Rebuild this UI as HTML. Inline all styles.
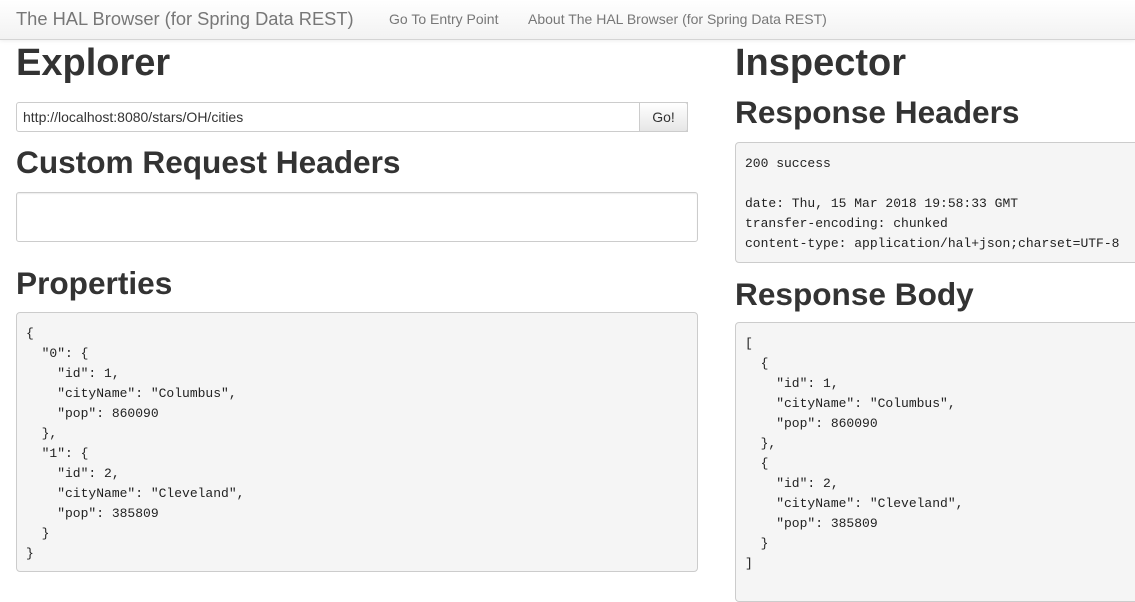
<!DOCTYPE html>
<html><head><style>
body{margin:0;width:1135px;height:582px;overflow:hidden;background:#fff;font-family:"Liberation Sans",sans-serif;color:#333;position:relative}
.nav{position:absolute;left:0;top:0;width:1135px;height:39px;background:linear-gradient(#fff,#f2f2f2);border-bottom:1px solid #d4d4d4;box-shadow:0 1px 4px rgba(0,0,0,.07)}
.a{position:absolute;white-space:nowrap}
.brand{left:16px;top:8px;font-size:18.3px;color:#777;font-weight:300}
.lk{top:11px;font-size:14px;color:#777}
h1,h2{margin:0;position:absolute;font-weight:bold;white-space:nowrap;color:#333}
h1{font-size:38px}
h2{font-size:31.6px}
pre{margin:0;position:absolute;background:#f5f5f5;border:1px solid #ccc;border-radius:4px;font-family:"Liberation Mono",monospace;font-size:13px;line-height:20px;padding:9px 9px;box-sizing:border-box;color:#222}
.in{position:absolute;border:1px solid #ccc;box-sizing:border-box;border-radius:3px;background:#fff}
</style></head><body>
<div class="nav"></div>
<div class="a brand">The HAL Browser (for Spring Data REST)</div>
<div class="a lk" style="left:389px">Go To Entry Point</div>
<div class="a lk" style="left:528px">About The HAL Browser (for Spring Data REST)</div>

<h1 style="left:16px;top:42px">Explorer</h1>
<div class="in" style="left:16px;top:102px;width:672px;height:30px;border-radius:3px 0 0 3px"></div>
<div class="a" style="left:23px;top:109px;font-size:14px">http://localhost:8080/stars/OH/cities</div>
<div class="in" style="left:639px;top:102px;width:49px;height:30px;background:linear-gradient(#fff,#e6e6e6);border-radius:0 3px 3px 0;font-size:14px;text-align:center;line-height:28px">Go!</div>
<h2 style="left:16px;top:144px">Custom Request Headers</h2>
<div class="in" style="left:16px;top:192px;width:682px;height:50px;box-shadow:inset 0 1px 1px rgba(0,0,0,.075)"></div>
<h2 style="left:16px;top:265px">Properties</h2>
<pre style="left:16px;top:312px;width:682px;height:260px;padding-top:11px">{
  "0": {
    "id": 1,
    "cityName": "Columbus",
    "pop": 860090
  },
  "1": {
    "id": 2,
    "cityName": "Cleveland",
    "pop": 385809
  }
}</pre>

<h1 style="left:735px;top:42px">Inspector</h1>
<h2 style="left:735px;top:94px">Response Headers</h2>
<pre style="left:735px;top:142px;width:420px;height:121px;padding-top:11px">200 success

date: Thu, 15 Mar 2018 19:58:33 GMT
transfer-encoding: chunked
content-type: application/hal+json;charset=UTF-8</pre>
<h2 style="left:735px;top:276px">Response Body</h2>
<pre style="left:735px;top:322px;width:420px;height:280px;padding-top:11px">[
  {
    "id": 1,
    "cityName": "Columbus",
    "pop": 860090
  },
  {
    "id": 2,
    "cityName": "Cleveland",
    "pop": 385809
  }
]</pre>
</body></html>
